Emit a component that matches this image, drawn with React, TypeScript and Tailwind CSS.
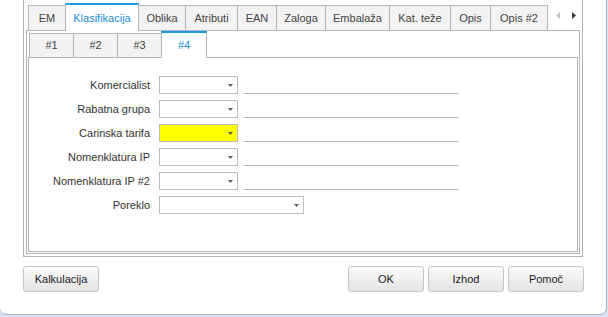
import React from "react";

const tabs = [
  { t: "EM", w: "w-[38px]" },
  { t: "Klasifikacija", w: "w-[74px]", active: true },
  { t: "Oblika", w: "w-[48px]" },
  { t: "Atributi", w: "w-[53px]" },
  { t: "EAN", w: "w-[40px]" },
  { t: "Zaloga", w: "w-[50px]" },
  { t: "Embalaža", w: "w-[65px]" },
  { t: "Kat. teže", w: "w-[62px]" },
  { t: "Opis", w: "w-[41px]" },
  { t: "Opis #2", w: "w-[58px]" },
];

const subTabs = ["#1", "#2", "#3", "#4"];

const rows = [
  { label: "Komercialist" },
  { label: "Rabatna grupa" },
  { label: "Carinska tarifa", yellow: true },
  { label: "Nomenklatura IP" },
  { label: "Nomenklatura IP #2" },
];

function Arrow() {
  return (
    <svg width="5" height="3" viewBox="0 0 5 3" className="absolute right-[4px] top-[7px]">
      <polygon points="0,0 5,0 2.5,3" fill="#5a5a5a" />
    </svg>
  );
}

function Combo({ yellow, wide }: { yellow?: boolean; wide?: boolean }) {
  return (
    <div
      className={
        "relative h-[18px] border border-[#bdbdbd] " +
        (wide ? "w-[145px] " : "w-[79px] ") +
        (yellow ? "bg-[#ffff00]" : "bg-white")
      }
    >
      <Arrow />
    </div>
  );
}

function Btn({ children, w }: { children: React.ReactNode; w: string }) {
  return (
    <div
      className={
        "h-[26px] " +
        w +
        " flex items-center justify-center rounded-[3px] border border-[#c6c6c6] bg-gradient-to-b from-[#fafafa] to-[#e4e4e4] text-[11px] text-[#222]"
      }
    >
      {children}
    </div>
  );
}

export default function App() {
  return (
    <div
      className="w-[608px] h-[317px] bg-[#d9e6f1] overflow-hidden"
      style={{ fontFamily: '"Liberation Sans", Arial, sans-serif' }}
    >
      <div className="w-[607px] h-[315px] bg-white rounded-br-[7px] rounded-bl-[7px] border-r border-b border-[#a8b6c3] flex flex-col">
        {/* outer frame */}
        <div className="ml-[23px] w-[560px] h-[257px] border-l border-r border-b border-[#b4b4b4] flex flex-col">
          {/* main tab strip */}
          <div className="h-[30px] flex items-end pl-[4px] relative z-10">
            {tabs.map((tb, i) =>
              tb.active ? (
                <div
                  key={i}
                  className={
                    tb.w +
                    " -ml-px h-[28px] mb-[-1px] bg-white border-l border-r border-[#b4b4b4] border-t-2 border-t-[#1a9be6] flex items-center justify-center text-[11px] text-[#1a8fd9]"
                  }
                >
                  {tb.t}
                </div>
              ) : (
                <div
                  key={i}
                  className={
                    tb.w +
                    (i === 0 ? "" : " -ml-px") +
                    " h-[25px] bg-[#f2f2f2] border-l border-r border-t border-[#b4b4b4] flex items-center justify-center text-[11px] text-[#444]"
                  }
                >
                  {tb.t}
                </div>
              )
            )}
            <div className="self-stretch flex items-center ml-[8px] gap-[12px]">
              <svg width="4" height="7" viewBox="0 0 4 7">
                <polygon points="4,0 4,7 0,3.5" fill="#c4c4c4" />
              </svg>
              <svg width="4" height="7" viewBox="0 0 4 7">
                <polygon points="0,0 0,7 4,3.5" fill="#3c3c3c" />
              </svg>
            </div>
          </div>
          {/* main panel */}
          <div className="ml-[2px] w-[554px] h-[224px] border border-[#b4b4b4] flex flex-col">
            {/* sub tab strip */}
            <div className="h-[26px] flex items-end pl-[2px] relative z-10">
              {subTabs.map((s, i) =>
                i === 3 ? (
                  <div
                    key={i}
                    className="w-[46px] -ml-px h-[27px] mb-[-1px] bg-white border-l border-r border-[#b4b4b4] border-t-2 border-t-[#1a9be6] flex items-center justify-center text-[11px] text-[#1a8fd9]"
                  >
                    {s}
                  </div>
                ) : (
                  <div
                    key={i}
                    className={
                      (i === 0 ? "" : "-ml-px ") +
                      "w-[45px] h-[24px] bg-[#f2f2f2] border-l border-r border-t border-[#b4b4b4] flex items-center justify-center text-[11px] text-[#444]"
                    }
                  >
                    {s}
                  </div>
                )
              )}
            </div>
            {/* sub panel */}
            <div className="ml-px w-[550px] h-[195px] border border-[#b4b4b4] pt-[18px] flex flex-col gap-[6px]">
              {rows.map((r, i) => (
                <div key={i} className="flex items-center h-[18px]">
                  <div className="w-[121px] text-right text-[11px] text-[#333] whitespace-nowrap">
                    {r.label}
                  </div>
                  <div className="ml-[9px]">
                    <Combo yellow={r.yellow} />
                  </div>
                  <div className="ml-[6px] w-[214px] h-[18px] border-b border-[#b4b4b4]" />
                </div>
              ))}
              <div className="flex items-center h-[18px]">
                <div className="w-[121px] text-right text-[11px] text-[#333]">Poreklo</div>
                <div className="ml-[9px]">
                  <Combo wide />
                </div>
              </div>
            </div>
          </div>
        </div>
        {/* buttons */}
        <div className="mt-[9px] flex">
          <div className="ml-[23px]">
            <Btn w="w-[76px]">Kalkulacija</Btn>
          </div>
          <div className="ml-[249px] flex gap-[4px]">
            <Btn w="w-[76px]">OK</Btn>
            <Btn w="w-[76px]">Izhod</Btn>
            <Btn w="w-[76px]">Pomoč</Btn>
          </div>
        </div>
      </div>
    </div>
  );
}
